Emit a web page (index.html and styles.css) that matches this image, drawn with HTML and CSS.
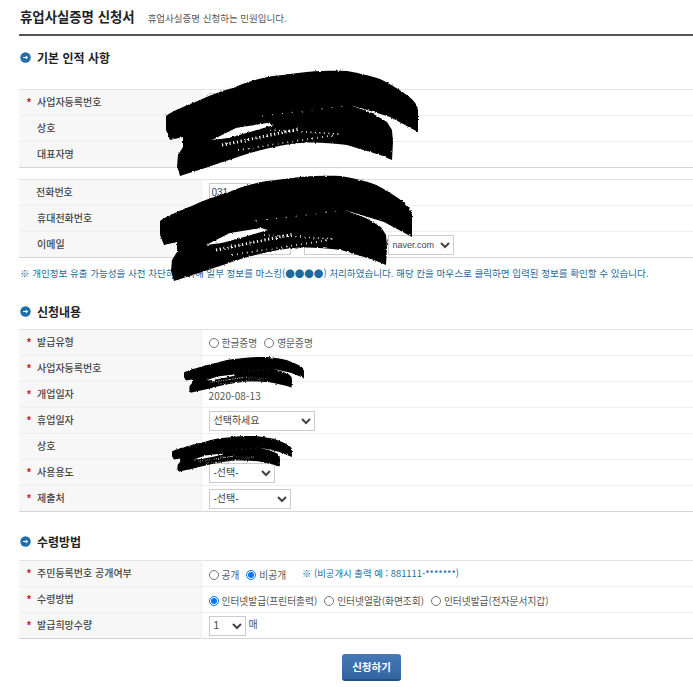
FILE: index.html
```html
<!DOCTYPE html>
<html lang="ko">
<head>
<meta charset="utf-8">
<title>휴업사실증명 신청서</title>
<link rel="stylesheet" href="styles.css">
</head>
<body>
<div class="page">
  <header class="head">
    <h1>휴업사실증명 신청서</h1>
    <p>휴업사실증명 신청하는 민원입니다.</p>
  </header>

  <h2 class="sec sec-first"><svg class="ico" viewBox="0 0 12 12"><circle cx="6" cy="6" r="5.7" fill="#1f6fa8"/><path d="M3.4 6h4.6M6.4 4.4 8 6 6.4 7.6" fill="none" stroke="#fff" stroke-width="1.1"/></svg>기본 인적 사항</h2>
  <table class="form t1">
    <tr><th><i>*</i>사업자등록번호</th><td><input class="in-s" type="text"></td></tr>
    <tr><th>상호</th><td></td></tr>
    <tr><th>대표자명</th><td></td></tr>
  </table>
  <table class="form t2">
    <tr><th class="tight">전화번호</th><td><input class="in-s" type="text" value="031"></td></tr>
    <tr><th>휴대전화번호</th><td></td></tr>
    <tr><th>이메일</th><td class="mail"><input class="in-m" type="text"><span>@</span><input class="in-l" type="text"><select class="s-mail"><option>naver.com</option></select></td></tr>
  </table>
  <p class="note">※ 개인정보 유출 가능성을 사전 차단하기 위해 일부 정보를 마스킹(●●●●) 처리하였습니다. 해당 칸을 마우스로 클릭하면 입력된 정보를 확인할 수 있습니다.</p>

  <h2 class="sec sec-2"><svg class="ico" viewBox="0 0 12 12"><circle cx="6" cy="6" r="5.7" fill="#1f6fa8"/><path d="M3.4 6h4.6M6.4 4.4 8 6 6.4 7.6" fill="none" stroke="#fff" stroke-width="1.1"/></svg>신청내용</h2>
  <table class="form">
    <tr><th><i>*</i>발급유형</th><td class="lift"><label class="r"><input type="radio" name="a">한글증명</label><label class="r"><input type="radio" name="a">영문증명</label></td></tr>
    <tr><th><i>*</i>사업자등록번호</th><td></td></tr>
    <tr><th><i>*</i>개업일자</th><td class="date">2020-08-13</td></tr>
    <tr><th><i>*</i>휴업일자</th><td><select class="s-106"><option>선택하세요</option></select></td></tr>
    <tr><th>상호</th><td></td></tr>
    <tr><th><i>*</i>사용용도</th><td><select class="s-66"><option>-선택-</option></select></td></tr>
    <tr><th><i>*</i>제출처</th><td><select class="s-82"><option>-선택-</option></select></td></tr>
  </table>

  <h2 class="sec sec-3"><svg class="ico" viewBox="0 0 12 12"><circle cx="6" cy="6" r="5.7" fill="#1f6fa8"/><path d="M3.4 6h4.6M6.4 4.4 8 6 6.4 7.6" fill="none" stroke="#fff" stroke-width="1.1"/></svg>수령방법</h2>
  <table class="form">
    <tr><th><i>*</i>주민등록번호 공개여부</th><td><label class="r"><input type="radio" name="b">공개</label><label class="r"><input type="radio" name="b" checked>비공개</label><span class="hint">※ (비공개시 출력 예 : 881111-*******)</span></td></tr>
    <tr><th><i>*</i>수령방법</th><td><label class="r"><input type="radio" name="c" checked>인터넷발급(프린터출력)</label><label class="r"><input type="radio" name="c">인터넷열람(화면조회)</label><label class="r"><input type="radio" name="c">인터넷발급(전자문서지갑)</label></td></tr>
    <tr><th><i>*</i>발급희망수량</th><td><select class="s-37"><option>1</option></select><span class="unit">매</span></td></tr>
  </table>

  <div class="actions"><button type="button">신청하기</button></div>

  <svg class="redact" viewBox="0 0 693 687" aria-hidden="true">
    <defs>
      <filter id="rough" x="-5%" y="-5%" width="110%" height="110%">
        <feTurbulence type="fractalNoise" baseFrequency=".45" numOctaves="2" seed="4"/>
        <feDisplacementMap in="SourceGraphic" scale="2.5" xChannelSelector="R" yChannelSelector="G"/>
      </filter>
      <g id="scrib">
        <path d="M166 116C172 111 190 104 200 100C215 93 225 90 233 88C250 80 268 76 283 75C305 71 330 70 347 71C362 74 372 76 380 79C390 84 397 88 404 93C414 100 417 104 418 110L418 132L390 117L364 109L350 105L372 113L387 122L392 130L393 142L392 160L380 155L347 145C330 143 315 142 300 143C280 145 265 149 250 153C225 161 200 170 180 176L177 166L178 155L183 147L183 137L170 140L166 130Z" fill="#000"/>
        <path d="M212 140L236 128L267 123L274 125L250 132L228 138Z" fill="#fff"/>
        <path d="M222 145L300 129" fill="none" stroke="#fff" stroke-width="3" stroke-dasharray="1.2 2.6"/>
        <path d="M238 150L335 135" fill="none" stroke="#fff" stroke-width="2" stroke-dasharray=".8 4.2"/>
        <path d="M262 116L345 106" fill="none" stroke="#fff" stroke-width=".9" stroke-dasharray="1 9"/>
        <path d="M270 130L340 134" fill="none" stroke="#fff" stroke-width="1.5" stroke-dasharray="1 3.5"/>
      </g>
    </defs>
    <g filter="url(#rough)">
      <use href="#scrib"/>
      <use href="#scrib" transform="translate(-6 105)"/>
      <use href="#scrib" transform="translate(105 333) scale(.476 .34)"/>
      <use href="#scrib" transform="translate(93 412) scale(.476 .34)"/>
    </g>
  </svg>
</div>
</body>
</html>
```
FILE: styles.css
```css
* { box-sizing: border-box; }
html, body { margin: 0; padding: 0; background: #fff; }
body { font-family: "Noto Sans CJK KR", "Liberation Sans", sans-serif; font-size: 10px; color: #444; }
.page { position: relative; width: 693px; height: 687px; overflow: hidden; padding-left: 19px; }
.head { display: flex; align-items: baseline; height: 36px; padding-top: 6px; border-bottom: 2px solid #555; }
.head h1 { margin: 0 13px 0 1px; font-size: 13.4px; line-height: 20px; font-weight: 700; color: #222; }
.head p { margin: 0; font-size: 9.5px; color: #555; }
.sec { display: flex; align-items: center; gap: 6px; margin: 0; height: 18px; font-size: 12px; font-weight: 700; color: #222; }
.ico { width: 11px; height: 11px; flex: none; margin-left: 1px; }
.sec-first { margin-top: 12px; margin-bottom: 23px; }
.sec-2 { margin-top: 22px; margin-bottom: 9px; }
.sec-3 { margin-top: 20px; margin-bottom: 10px; }
.form { width: 674px; border-collapse: collapse; table-layout: fixed; border-top: 1px solid #e3e3e3; border-bottom: 1px solid #d6d6d6; }
.form tr + tr { border-top: 1px solid #eee; }
.form th { width: 182px; height: 26px; padding: 0 0 2px 18px; background: #f7f7f7; border-right: 1px solid #eee; text-align: left; font-weight: 500; font-size: 10px; color: #444; white-space: nowrap; position: relative; }
.form th.tight { padding-left: 17px; }
.form th i { position: absolute; left: 8px; top: 8px; font: 700 10px/10px "Liberation Sans", sans-serif; color: #c8101a; }
.form td { padding: 0 0 0 7px; font-size: 10px; color: #555; white-space: nowrap; }
.form td.lift { padding-bottom: 2px; }
.form td.date { padding-top: 2px; letter-spacing: .1px; }
.t1 { margin-bottom: 11px; }
.note { margin: 8px 0 0 1px; font-size: 9.55px; line-height: 14px; color: #1c6a9c; white-space: nowrap; }
input[type=text], select { height: 20px; border: 1px solid #ccc; border-radius: 0; background: #fff; font: 10px "Liberation Sans", "Noto Sans CJK KR", sans-serif; color: #444; vertical-align: middle; }
input[type=text] { padding: 0 2px; }
select { padding: 0; }
.in-s { width: 42px; }
.in-m { width: 82px; }
.in-l { width: 80px; }
.mail span { display: inline-block; width: 13px; text-align: center; }
.s-mail { width: 66px; margin-left: 4px; font-size: 9px; }
.s-106 { width: 106px; }
.s-66 { width: 66px; }
.s-82 { width: 82px; }
.s-37 { width: 37px; }
.r { display: inline-flex; align-items: center; gap: 3px; margin-right: 7px; font-size: 9.7px; color: #555; vertical-align: middle; }
.r input { width: 10px; height: 10px; margin: 0; }
.hint { margin-left: 9px; color: #1c6a9c; font-size: 9.4px; }
.unit { margin-left: 3px; }
.actions { display: flex; justify-content: center; margin-top: 15px; padding-left: 31px; }
.actions button { width: 59px; height: 27px; padding: 0; border: 0; border-bottom: 2px solid #274f80; border-radius: 3px; background: linear-gradient(#4479b5, #3465a2); color: #fff; font: 700 10.5px "Noto Sans CJK KR", sans-serif; }
.redact { position: absolute; left: 0; top: 0; width: 693px; height: 687px; pointer-events: none; }
```
